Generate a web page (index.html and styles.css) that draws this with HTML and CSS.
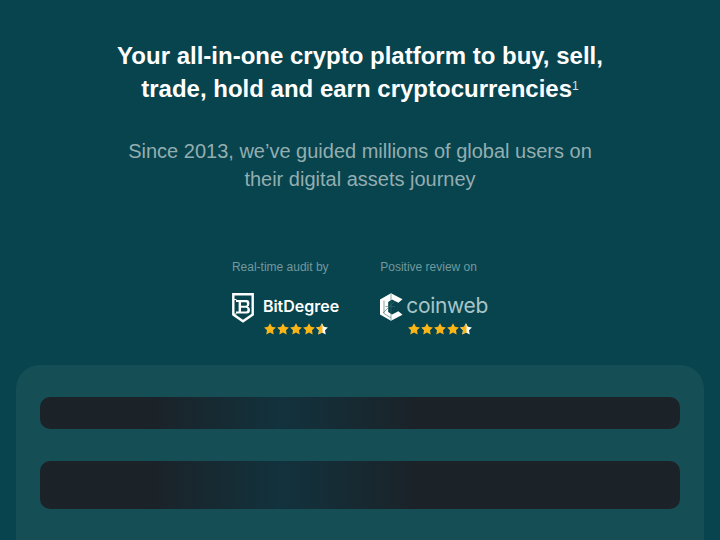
FILE: index.html
```html
<!DOCTYPE html>
<html lang="en">
<head>
<meta charset="utf-8">
<title>Crypto platform</title>
<link rel="stylesheet" href="styles.css">
</head>
<body>
<main class="page">
  <h1 class="title">Your all-in-one crypto platform to buy, sell,<br>trade, hold and earn cryptocurrencies<sup class="note">1</sup></h1>
  <p class="lead">Since 2013, we’ve guided millions of global users on<br>their digital assets journey</p>
  <div class="proofs">
    <section class="proof">
      <div class="proof-label">Real-time audit by</div>
      <div class="brand brand-audit">
        <svg class="shield" width="22" height="30" viewBox="0 0 22 30" aria-hidden="true">
          <path d="M1.3 1.3H20.7V21.6L11 28.2 1.3 21.6Z" fill="none" stroke="#fff" stroke-width="2.4"/>
          <path d="M1 6.5H4.5M1 21H4.5" fill="none" stroke="#fff" stroke-width="1.2"/>
          <path d="M4 7H14.6Q17.4 7 17.4 10.4 17.4 12.9 15.6 13.6 18 14.3 18 17 18 20.6 14.8 20.6H4V18.5H6.6V9.1H4ZM9 9.2V12.7H14Q15 12.7 15 10.9 15 9.2 14 9.2ZM9 14.7V18.4H14.2Q15.5 18.4 15.5 16.5 15.5 14.7 14.2 14.7Z" fill="#fff" fill-rule="evenodd"/>
        </svg>
        <div class="brand-text">
          <span class="brand-bit">BitDegree</span>
          <svg class="stars" width="64" height="12" viewBox="0 0 64 12" aria-hidden="true">
            <defs>
              <path id="s" d="M6 .2 7.9 3.8 11.9 4.4 9 7.3 9.7 11.5 6 9.6 2.3 11.5 3 7.3.1 4.4 4.1 3.8Z"/>
              <clipPath id="half"><rect x="52" y="0" width="6.5" height="12"/></clipPath>
            </defs>
            <use href="#s" fill="#fbb516"/>
            <use href="#s" x="13" fill="#fbb516"/>
            <use href="#s" x="26" fill="#fbb516"/>
            <use href="#s" x="39" fill="#fbb516"/>
            <use href="#s" x="52" fill="#fff"/>
            <g clip-path="url(#half)"><use href="#s" x="52" fill="#fbb516"/></g>
          </svg>
        </div>
      </div>
    </section>
    <section class="proof">
      <div class="proof-label">Positive review on</div>
      <div class="brand brand-review">
        <svg class="cube" width="23" height="28" viewBox="0 0 23 28" aria-hidden="true">
          <path d="M11 .3 22.5 6.3 18.4 9.8 12 6.6 8.2 9V19L12 21.4 18.4 18.2 22.5 21.7 11 27.7 0 21.5V6.5Z" fill="#fff"/>
          <path d="M4 7.5V20.5L11 25M11 1V27M3 20 15 8M5.5 13.5H15" fill="none" stroke="#3d6a71" stroke-width=".6"/>
        </svg>
        <div class="brand-text">
          <span class="brand-coin">coinweb</span>
          <svg class="stars" width="64" height="12" viewBox="0 0 64 12" aria-hidden="true">
            <use href="#s" fill="#fbb516"/>
            <use href="#s" x="13" fill="#fbb516"/>
            <use href="#s" x="26" fill="#fbb516"/>
            <use href="#s" x="39" fill="#fbb516"/>
            <use href="#s" x="52" fill="#fff"/>
            <g clip-path="url(#half)"><use href="#s" x="52" fill="#fbb516"/></g>
          </svg>
        </div>
      </div>
    </section>
  </div>
  <section class="card">
    <div class="bar bar-thin"></div>
    <div class="bar bar-thick"></div>
  </section>
</main>
</body>
</html>
```
FILE: styles.css
```css
* { box-sizing: border-box; }
html, body { margin: 0; height: 540px; overflow: hidden; }
body {
  background: #07444e;
  font-family: "Liberation Sans", Arial, sans-serif;
  color: #fff;
}
.page {
  display: flex;
  flex-direction: column;
  align-items: center;
  height: 540px;
  overflow: hidden;
  padding: 39px 16px 0;
}
.title {
  margin: 0;
  font-size: 24px;
  line-height: 33px;
  font-weight: 700;
  text-align: center;
}
.note {
  font-size: 12px;
  font-weight: 400;
  line-height: 0;
  vertical-align: 7px;
  color: #d5e0e1;
}
.lead {
  margin: 32px 0 0;
  font-size: 20px;
  line-height: 28px;
  text-align: center;
  color: #93aeb0;
}
.proofs {
  display: flex;
  gap: 41px;
  margin-top: 67px;
}
.proof {
  display: flex;
  flex-direction: column;
  align-items: flex-start;
}
.proof-label {
  font-size: 12px;
  line-height: 14px;
  color: #74989d;
}
.brand {
  display: flex;
  margin-top: 19px;
}
.brand-text {
  display: flex;
  flex-direction: column;
  align-items: flex-start;
}
.brand-audit .brand-text { margin-left: 9px; }
.brand-review .brand-text { margin-left: 3px; }
.brand-bit {
  font-family: Inter, "Liberation Sans", sans-serif;
  font-size: 16px;
  line-height: 26px;
  font-weight: 600;
  color: #fff;
}
.brand-coin {
  font-family: Inter, "Liberation Sans", sans-serif;
  font-size: 21px;
  line-height: 26px;
  font-weight: 400;
  letter-spacing: -0.3px;
  color: #a8c4c6;
}
.stars { display: block; margin: 4px 0 0 1px; }
.brand-review .stars { margin-left: 2px; }
.card {
  align-self: stretch;
  display: flex;
  flex: none;
  flex-direction: column;
  gap: 32px;
  height: 240px;
  margin-top: 30px;
  padding: 32px 24px;
  border-radius: 24px;
  background: #164e56;
}
.bar {
  flex: none;
  border-radius: 10px;
  background: linear-gradient(90deg, #1b2228 0%, #1b2228 17%, #12323d 38%, #1b2228 59%, #1b2228 100%);
}
.bar-thin { height: 32px; }
.bar-thick { height: 48px; }
```
